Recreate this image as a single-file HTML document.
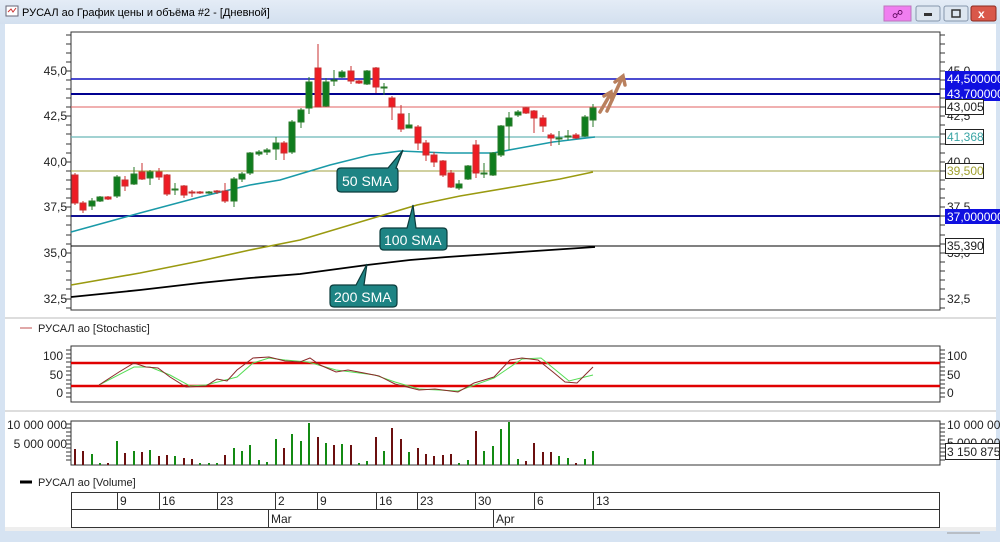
<!DOCTYPE html>
<html><head><meta charset="utf-8"><style>
html,body{margin:0;padding:0;width:1000px;height:542px;overflow:hidden;background:#d6e3f2}
svg{display:block}
text{font-family:"Liberation Sans","DejaVu Sans",sans-serif}
</style></head><body>
<svg width="1000" height="542" viewBox="0 0 1000 542" xmlns="http://www.w3.org/2000/svg">
<defs><linearGradient id="tb" x1="0" y1="0" x2="0" y2="1"><stop offset="0" stop-color="#e4ecf6"/><stop offset="1" stop-color="#d3e0ef"/></linearGradient></defs>
<rect width="1000" height="542" fill="#d6e3f2"/>
<rect width="1000" height="24" fill="url(#tb)"/>
<rect x="6" y="6" width="12" height="10" fill="#fff" stroke="#667" stroke-width="1"/>
<path d="M8 12 L11 9 L13 12 L16 8" stroke="#c33" fill="none"/>
<text x="22" y="16" font-size="11" fill="#000">РУСАЛ ао График цены и объёма #2 - [Дневной]</text>
<rect x="884" y="6" width="27" height="15" fill="#f07ef0" stroke="#b7b"/>
<text x="892" y="18" font-size="11" fill="#505">&#x260D;</text>
<rect x="916" y="6" width="24" height="15" rx="2" fill="#dde6f0" stroke="#8596ab"/>
<rect x="924" y="13" width="8" height="3" fill="#333"/>
<rect x="944" y="6" width="24" height="15" rx="2" fill="#dde6f0" stroke="#8596ab"/>
<rect x="952" y="10" width="8" height="7" fill="none" stroke="#333" stroke-width="1.5"/>
<rect x="971" y="6" width="25" height="15" rx="2" fill="#d9584a" stroke="#8a2a20"/>
<text x="978" y="18" font-size="12" font-weight="bold" fill="#fff">x</text>
<rect x="5" y="24" width="991" height="506" fill="#fff"/>
<rect x="5" y="527" width="991" height="4" fill="#eeeeee"/>
<line x1="5" y1="318" x2="996" y2="318" stroke="#bbb"/>
<line x1="5" y1="411" x2="996" y2="411" stroke="#bbb"/>

<!-- main panel -->
<rect x="71" y="32" width="869" height="278" fill="#fff" stroke="#333"/>
<g stroke="#333">
<line x1="71" y1="32" x2="71" y2="310"/>
</g>
<g font-size="12" fill="#222" text-anchor="end">
<text x="67" y="75">45,0</text><text x="67" y="120">42,5</text><text x="67" y="166">40,0</text><text x="67" y="211">37,5</text><text x="67" y="257">35,0</text><text x="67" y="303">32,5</text>
</g>
<g stroke="#333">
<path d="M66 35h5M66 44h5M66 53h5M66 62h5M66 71h5M66 80h5M66 89h5M66 98h5M66 107h5M66 116h5M66 125h5M66 134h5M66 144h5M66 153h5M66 162h5M66 171h5M66 180h5M66 189h5M66 198h5M66 207h5M66 216h5M66 225h5M66 235h5M66 244h5M66 253h5M66 262h5M66 271h5M66 280h5M66 289h5M66 299h5M66 308h5"/>
<path d="M940 35h5M940 44h5M940 53h5M940 62h5M940 71h5M940 80h5M940 89h5M940 98h5M940 107h5M940 116h5M940 125h5M940 134h5M940 144h5M940 153h5M940 162h5M940 171h5M940 180h5M940 189h5M940 198h5M940 207h5M940 216h5M940 225h5M940 235h5M940 244h5M940 253h5M940 262h5M940 271h5M940 280h5M940 289h5M940 299h5M940 308h5"/>
</g>
<g font-size="12" fill="#222">
<text x="947" y="75">45,0</text><text x="947" y="120">42,5</text><text x="947" y="166">40,0</text><text x="947" y="211">37,5</text><text x="947" y="257">35,0</text><text x="947" y="303">32,5</text>
</g>
<!-- horizontal levels -->
<line x1="71" y1="79" x2="940" y2="79" stroke="#1010c0" stroke-width="1.5"/>
<line x1="71" y1="94" x2="940" y2="94" stroke="#000090" stroke-width="2"/>
<line x1="71" y1="107" x2="940" y2="107" stroke="#e06060" stroke-width="1"/>
<line x1="71" y1="137" x2="940" y2="137" stroke="#6ab8b8" stroke-width="1.2"/>
<line x1="71" y1="171" x2="940" y2="171" stroke="#a0a040" stroke-width="1"/>
<line x1="71" y1="216" x2="940" y2="216" stroke="#101090" stroke-width="2"/>
<line x1="71" y1="246" x2="940" y2="246" stroke="#000" stroke-width="1"/>
<!-- SMAs -->
<polyline fill="none" stroke="#1a9aa8" stroke-width="1.6" points="71,232 140,213 200,197 250,185 280,180 330,165 370,155 400,151 447,153 493,153 520,148 553,142 595,137"/>
<polyline fill="none" stroke="#9a9a10" stroke-width="1.6" points="71,285 140,273 200,261 250,250 300,240 360,222 417,205 460,196 513,187 560,179 593,172"/>
<polyline fill="none" stroke="#000" stroke-width="1.8" points="71,297 140,290 200,283 250,278 300,274 367,265 410,260 447,257 520,252 595,247"/>
<!-- candles -->
<g stroke-width="1">
<g fill="#ee1c24" stroke="#c83030">
<line x1="75" y1="173" x2="75" y2="205"/><rect x="72" y="175" width="6" height="28"/>
<line x1="83" y1="201" x2="83" y2="213"/><rect x="80" y="203" width="6" height="7"/>
<line x1="108" y1="196" x2="108" y2="200"/><rect x="105" y="197" width="6" height="2"/>
<line x1="125" y1="176" x2="125" y2="191"/><rect x="122" y="180" width="6" height="6"/>
<line x1="142" y1="163" x2="142" y2="180"/><rect x="139" y="172" width="6" height="7"/>
<line x1="159" y1="168" x2="159" y2="180"/><rect x="156" y="172" width="6" height="5"/>
<line x1="167" y1="174" x2="167" y2="196"/><rect x="164" y="175" width="6" height="19"/>
<line x1="184" y1="185" x2="184" y2="198"/><rect x="181" y="186" width="6" height="9"/>
<line x1="192" y1="190" x2="192" y2="197"/><rect x="189" y="192" width="6" height="1"/>
<line x1="200" y1="191" x2="200" y2="194"/><rect x="197" y="192" width="6" height="1"/>
<line x1="217" y1="190" x2="217" y2="194"/><rect x="214" y="191" width="6" height="1"/>
<line x1="225" y1="183" x2="225" y2="203"/><rect x="222" y="191" width="6" height="10"/>
<line x1="284" y1="141" x2="284" y2="160"/><rect x="281" y="143" width="6" height="10"/>
<line x1="318" y1="44" x2="318" y2="107"/><rect x="315" y="68" width="6" height="39"/>
<line x1="351" y1="66" x2="351" y2="84"/><rect x="348" y="71" width="6" height="10"/>
<line x1="359" y1="80" x2="359" y2="84"/><rect x="356" y="81" width="6" height="2"/>
<line x1="376" y1="67" x2="376" y2="93"/><rect x="373" y="68" width="6" height="19"/>
<line x1="392" y1="96" x2="392" y2="120"/><rect x="389" y="98" width="6" height="9"/>
<line x1="401" y1="105" x2="401" y2="132"/><rect x="398" y="114" width="6" height="15"/>
<line x1="418" y1="125" x2="418" y2="150"/><rect x="415" y="127" width="6" height="16"/>
<line x1="426" y1="140" x2="426" y2="161"/><rect x="423" y="143" width="6" height="12"/>
<line x1="434" y1="152" x2="434" y2="167"/><rect x="431" y="155" width="6" height="7"/>
<line x1="443" y1="160" x2="443" y2="177"/><rect x="440" y="161" width="6" height="14"/>
<line x1="451" y1="170" x2="451" y2="188"/><rect x="448" y="173" width="6" height="14"/>
<line x1="476" y1="140" x2="476" y2="178"/><rect x="473" y="145" width="6" height="28"/>
<line x1="526" y1="107" x2="526" y2="114"/><rect x="523" y="108" width="6" height="5"/>
<line x1="534" y1="110" x2="534" y2="133"/><rect x="531" y="111" width="6" height="7"/>
<line x1="543" y1="115" x2="543" y2="132"/><rect x="540" y="118" width="6" height="8"/>
<line x1="551" y1="133" x2="551" y2="146"/><rect x="548" y="135" width="6" height="3"/>
<line x1="576" y1="133" x2="576" y2="139"/><rect x="573" y="135" width="6" height="3"/>
</g>
<g fill="#0f7d1e" stroke="#2a7a2a">
<line x1="92" y1="198" x2="92" y2="210"/><rect x="89" y="201" width="6" height="5"/>
<line x1="100" y1="196" x2="100" y2="202"/><rect x="97" y="197" width="6" height="4"/>
<line x1="117" y1="175" x2="117" y2="198"/><rect x="114" y="177" width="6" height="19"/>
<line x1="134" y1="167" x2="134" y2="185"/><rect x="131" y="174" width="6" height="10"/>
<line x1="150" y1="170" x2="150" y2="185"/><rect x="147" y="172" width="6" height="6"/>
<line x1="175" y1="183" x2="175" y2="195"/><rect x="172" y="189" width="6" height="1"/>
<line x1="209" y1="191" x2="209" y2="194"/><rect x="206" y="192" width="6" height="1"/>
<line x1="234" y1="177" x2="234" y2="207"/><rect x="231" y="179" width="6" height="22"/>
<line x1="242" y1="172" x2="242" y2="182"/><rect x="239" y="174" width="6" height="5"/>
<line x1="250" y1="152" x2="250" y2="175"/><rect x="247" y="153" width="6" height="20"/>
<line x1="259" y1="150" x2="259" y2="156"/><rect x="256" y="152" width="6" height="2"/>
<line x1="267" y1="148" x2="267" y2="155"/><rect x="264" y="150" width="6" height="2"/>
<line x1="276" y1="137" x2="276" y2="160"/><rect x="273" y="143" width="6" height="6"/>
<line x1="292" y1="120" x2="292" y2="154"/><rect x="289" y="122" width="6" height="30"/>
<line x1="301" y1="108" x2="301" y2="128"/><rect x="298" y="110" width="6" height="12"/>
<line x1="309" y1="77" x2="309" y2="114"/><rect x="306" y="82" width="6" height="26"/>
<line x1="326" y1="78" x2="326" y2="107"/><rect x="323" y="82" width="6" height="24"/>
<line x1="334" y1="70" x2="334" y2="86"/><rect x="331" y="80" width="6" height="1"/>
<line x1="342" y1="70" x2="342" y2="78"/><rect x="339" y="72" width="6" height="5"/>
<line x1="367" y1="70" x2="367" y2="85"/><rect x="364" y="71" width="6" height="13"/>
<line x1="384" y1="83" x2="384" y2="95"/><rect x="381" y="87" width="6" height="1"/>
<line x1="409" y1="113" x2="409" y2="128"/><rect x="406" y="125" width="6" height="3"/>
<line x1="459" y1="180" x2="459" y2="190"/><rect x="456" y="184" width="6" height="4"/>
<line x1="468" y1="165" x2="468" y2="180"/><rect x="465" y="166" width="6" height="13"/>
<line x1="484" y1="163" x2="484" y2="178"/><rect x="481" y="173" width="6" height="1"/>
<line x1="493" y1="152" x2="493" y2="176"/><rect x="490" y="153" width="6" height="22"/>
<line x1="501" y1="125" x2="501" y2="157"/><rect x="498" y="126" width="6" height="29"/>
<line x1="509" y1="112" x2="509" y2="150"/><rect x="506" y="118" width="6" height="8"/>
<line x1="518" y1="110" x2="518" y2="117"/><rect x="515" y="112" width="6" height="3"/>
<line x1="559" y1="131" x2="559" y2="145"/><rect x="556" y="138" width="6" height="1"/>
<line x1="568" y1="130" x2="568" y2="140"/><rect x="565" y="136" width="6" height="1"/>
<line x1="585" y1="115" x2="585" y2="137"/><rect x="582" y="117" width="6" height="19"/>
<line x1="593" y1="104" x2="593" y2="127"/><rect x="590" y="108" width="6" height="12"/>
</g>
</g>
<!-- arrows -->
<g stroke="#b9805e" stroke-width="3.5" fill="none" stroke-linecap="round">
<path d="M600 112 L611 93"/><path d="M604 96 L611 92 L612 100"/>
<path d="M607 111 L622 78"/><path d="M615 82 L623 76 L625 85"/>
</g>
<!-- callouts -->
<g fill="#1e8484" stroke="#0c3c3c" stroke-width="1.2">
<path d="M341 168 H388 L403 150 L396 168 Q398 168 398 172 V188 Q398 192 394 192 H341 Q337 192 337 188 V172 Q337 168 341 168Z"/>
<path d="M384 228 H407 L413 205 L416 228 H443 Q447 228 447 232 V246 Q447 250 443 250 H384 Q380 250 380 246 V232 Q380 228 384 228Z"/>
<path d="M334 285 H356 L367 264 L364 285 H393 Q397 285 397 289 V303 Q397 307 393 307 H334 Q330 307 330 303 V289 Q330 285 334 285Z"/>
</g>
<g font-size="14" fill="#fff"><text x="342" y="186">50 SMA</text><text x="384" y="245">100 SMA</text><text x="334" y="302">200 SMA</text></g>
<!-- right value labels -->
<rect x="945" y="71" width="55" height="15" fill="#1010e0"/><text x="947" y="83" font-size="12" fill="#fff">44,5000000</text>
<rect x="945" y="86" width="55" height="15" fill="#1010e0"/><text x="947" y="98" font-size="12" fill="#fff">43,7000000</text>
<rect x="945.5" y="99.5" width="38" height="15" fill="#fff" stroke="#222"/><text x="947" y="111" font-size="12" fill="#222">43,005</text>
<rect x="945.5" y="129.5" width="38" height="15" fill="#fff" stroke="#222"/><text x="947" y="141" font-size="12" fill="#3aa5a5">41,368</text>
<rect x="945.5" y="163.5" width="38" height="15" fill="#fff" stroke="#222"/><text x="947" y="175" font-size="12" fill="#a0a030">39,500</text>
<rect x="945" y="209" width="55" height="15" fill="#1010e0"/><text x="947" y="221" font-size="12" fill="#fff">37,0000000</text>
<rect x="945.5" y="238.5" width="38" height="15" fill="#fff" stroke="#222"/><text x="947" y="250" font-size="12" fill="#222">35,390</text>

<!-- stochastic -->
<line x1="20" y1="328" x2="32" y2="328" stroke="#c05050"/>
<text x="38" y="332" font-size="11" fill="#222">РУСАЛ ао [Stochastic]</text>
<rect x="71" y="346" width="869" height="56" fill="#fff" stroke="#333"/>
<line x1="71" y1="363" x2="940" y2="363" stroke="#e00000" stroke-width="2.5"/>
<line x1="71" y1="386" x2="940" y2="386" stroke="#e00000" stroke-width="2.5"/>
<g font-size="12" fill="#222"><text x="63" y="360" text-anchor="end">100</text><text x="63" y="379" text-anchor="end">50</text><text x="63" y="397" text-anchor="end">0</text>
<text x="947" y="360">100</text><text x="947" y="379">50</text><text x="947" y="397">0</text></g>
<path d="M66 350h5M66 354h5M66 358h5M66 362h5M66 367h5M66 371h5M66 375h5M66 380h5M66 384h5M66 388h5M66 393h5M66 397h5M940 350h5M940 354h5M940 358h5M940 362h5M940 367h5M940 371h5M940 375h5M940 380h5M940 384h5M940 388h5M940 393h5M940 397h5" stroke="#333"/>
<polyline fill="none" stroke="#55dd55" stroke-width="1" points="99,385 134,367 150,367 170,375 190,386 206,385 237,377 253,363 269,358 285,360 308,362 336,370 375,375 395,382 419,389 458,391 494,378 522,359 541,358 569,381 593,375"/>
<polyline fill="none" stroke="#8b2a2a" stroke-width="1" points="99,385 119,372 134,363 146,367 158,368 170,377 186,387 206,386 217,379 227,381 237,370 253,358 269,357 285,361 300,362 310,358 320,365 336,372 348,370 364,373 379,376 395,384 419,390 435,389 458,392 474,383 494,377 510,360 522,358 538,360 553,372 565,382 577,383 593,367"/>

<!-- volume -->
<rect x="71" y="421" width="869" height="44" fill="#fff" stroke="#333"/>
<g font-size="12" fill="#222"><text x="67" y="429" text-anchor="end">10 000 000</text><text x="67" y="448" text-anchor="end">5 000 000</text>
<text x="947" y="429">10 000 000</text><text x="947" y="447">5 000 000</text></g>
<path d="M66 424h5M66 428h5M66 432h5M66 436h5M66 440h5M66 444h5M66 448h5M66 452h5M66 456h5M66 460h5M940 424h5M940 428h5M940 432h5M940 436h5M940 440h5M940 444h5M940 448h5M940 452h5M940 456h5M940 460h5" stroke="#333"/>
<rect x="945.5" y="443.5" width="54" height="16" fill="#fff" stroke="#222"/><text x="947" y="456" font-size="12" fill="#222">3 150 875</text>
<g stroke-width="2">
<g stroke="#6b0f0f">
<path d="M75 465V449M83 465V451M108 465V463M125 465V453M142 465V452M159 465V456M167 465V455M184 465V458M192 465V459M225 465V455M284 465V448M318 465V437M334 465V445M351 465V445M376 465V437M392 465V428M401 465V439M418 465V448M426 465V454M434 465V456M443 465V455M451 465V454M476 465V431M526 465V461M534 465V443M543 465V452M551 465V452M576 465V463"/>
</g>
<g stroke="#138a13">
<path d="M92 465V454M100 465V463M117 465V441M134 465V451M150 465V450M175 465V456M200 465V463M209 465V463M217 465V463M234 465V448M242 465V451M250 465V445M259 465V460M267 465V462M276 465V439M292 465V434M301 465V441M309 465V423M326 465V443M342 465V444M359 465V463M367 465V461M384 465V451M409 465V452M459 465V463M468 465V460M484 465V451M493 465V446M501 465V429M509 465V422M518 465V459M559 465V456M568 465V458M585 465V459M593 465V451"/>
</g>
</g>
<line x1="20" y1="482" x2="32" y2="482" stroke="#000" stroke-width="3"/>
<text x="38" y="486" font-size="11" fill="#222">РУСАЛ ао [Volume]</text>
<!-- timeline -->
<g stroke="#333" fill="none">
<rect x="71.5" y="492.5" width="868" height="35"/>
<line x1="71" y1="509.5" x2="940" y2="509.5"/>
<path d="M117.5 492V509M159.5 492V509M217.5 492V509M275.5 492V509M317.5 492V509M376.5 492V509M417.5 492V509M475.5 492V509M534.5 492V509M593.5 492V509M268.5 509V527M493.5 509V527"/>
</g>
<g font-size="12" fill="#222">
<text x="120" y="505">9</text><text x="162" y="505">16</text><text x="220" y="505">23</text><text x="278" y="505">2</text><text x="320" y="505">9</text><text x="379" y="505">16</text><text x="420" y="505">23</text><text x="478" y="505">30</text><text x="537" y="505">6</text><text x="596" y="505">13</text>
<text x="271" y="523">Mar</text><text x="496" y="523">Apr</text>
</g>
<line x1="947" y1="533" x2="980" y2="533" stroke="#999"/>
</svg>
</body></html>
